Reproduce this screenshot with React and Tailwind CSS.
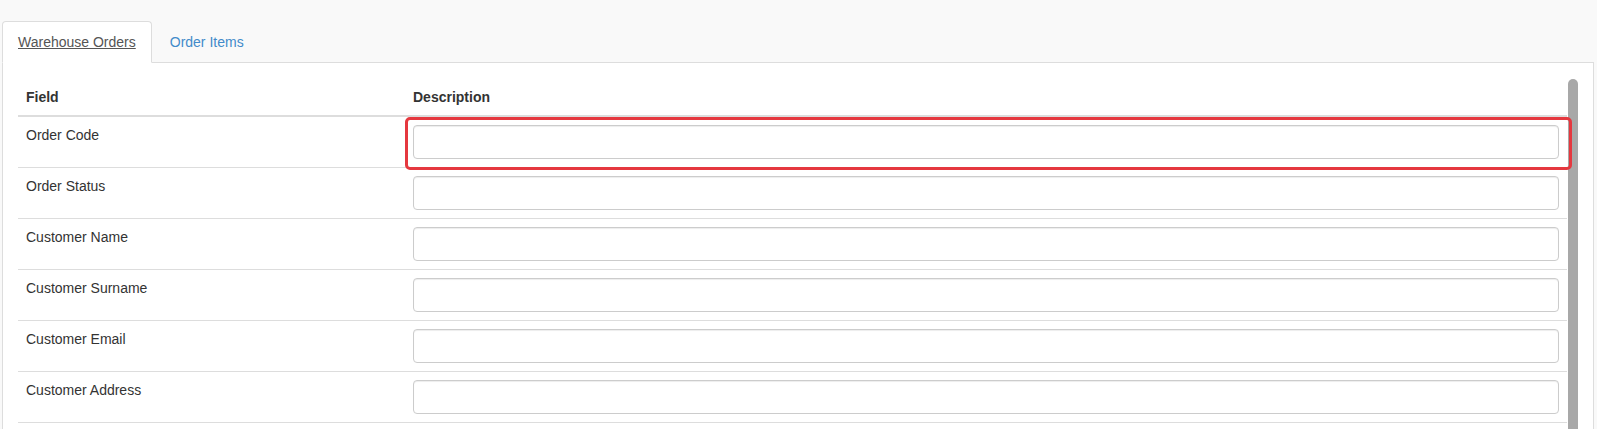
import React from 'react';

const fields = [
  'Order Code',
  'Order Status',
  'Customer Name',
  'Customer Surname',
  'Customer Email',
  'Customer Address',
];

function FieldRow({ label, highlighted }) {
  return (
    <tr>
      <td className="border-t border-[#ddd] p-2 align-top leading-5 w-[387px]">{label}</td>
      <td className="border-t border-[#ddd] p-2 align-top relative">
        <input
          type="text"
          className="block w-full h-[34px] px-3 border border-[#ccc] rounded bg-white shadow-[inset_0_1px_1px_rgba(0,0,0,0.075)] outline-none"
        />
        {highlighted && (
          // annotation box drawn over the first input
          <div className="absolute left-0 top-0 -right-[5px] -bottom-[3px] border-[3.5px] border-[#e5383f] rounded-[5px] pointer-events-none" />
        )}
      </td>
    </tr>
  );
}

export default function App() {
  return (
    <div
      className="h-[429px] overflow-hidden bg-[#f9f9f9] pt-[21px] pl-[2px] pr-[3px] text-[14px] text-[#333]"
      style={{ fontFamily: '"Liberation Sans", Arial, sans-serif' }}
    >
      {/* tabs */}
      <ul className="flex -mb-px relative z-10">
        <li className="mr-[2px]">
          <span className="block px-[15px] py-[10px] leading-5 bg-white border border-[#ddd] border-b-white rounded-t-[4px] text-[#555] underline">
            Warehouse Orders
          </span>
        </li>
        <li>
          <span className="block px-[15px] py-[10px] leading-5 border border-transparent text-[#428bca]">
            Order Items
          </span>
        </li>
      </ul>

      {/* panel */}
      <div className="bg-white border border-[#ddd] pt-[16px] pl-[15px] pr-[15px] h-[400px]">
        <div className="flex h-full">
          <table className="flex-1 self-start border-collapse">
            <thead>
              <tr>
                <th className="text-left font-bold p-2 leading-5 border-b-2 border-[#ddd]">Field</th>
                <th className="text-left font-bold p-2 leading-5 border-b-2 border-[#ddd]">Description</th>
              </tr>
            </thead>
            <tbody>
              {fields.map((f, i) => (
                <FieldRow key={f} label={f} highlighted={i === 0} />
              ))}
              <tr>
                <td className="border-t border-[#ddd] h-[50px]" />
                <td className="border-t border-[#ddd]" />
              </tr>
            </tbody>
          </table>
          {/* scrollbar thumb */}
          <div className="w-[10px] ml-px bg-[#a8a8a8] rounded-t-full" />
        </div>
      </div>
    </div>
  );
}
